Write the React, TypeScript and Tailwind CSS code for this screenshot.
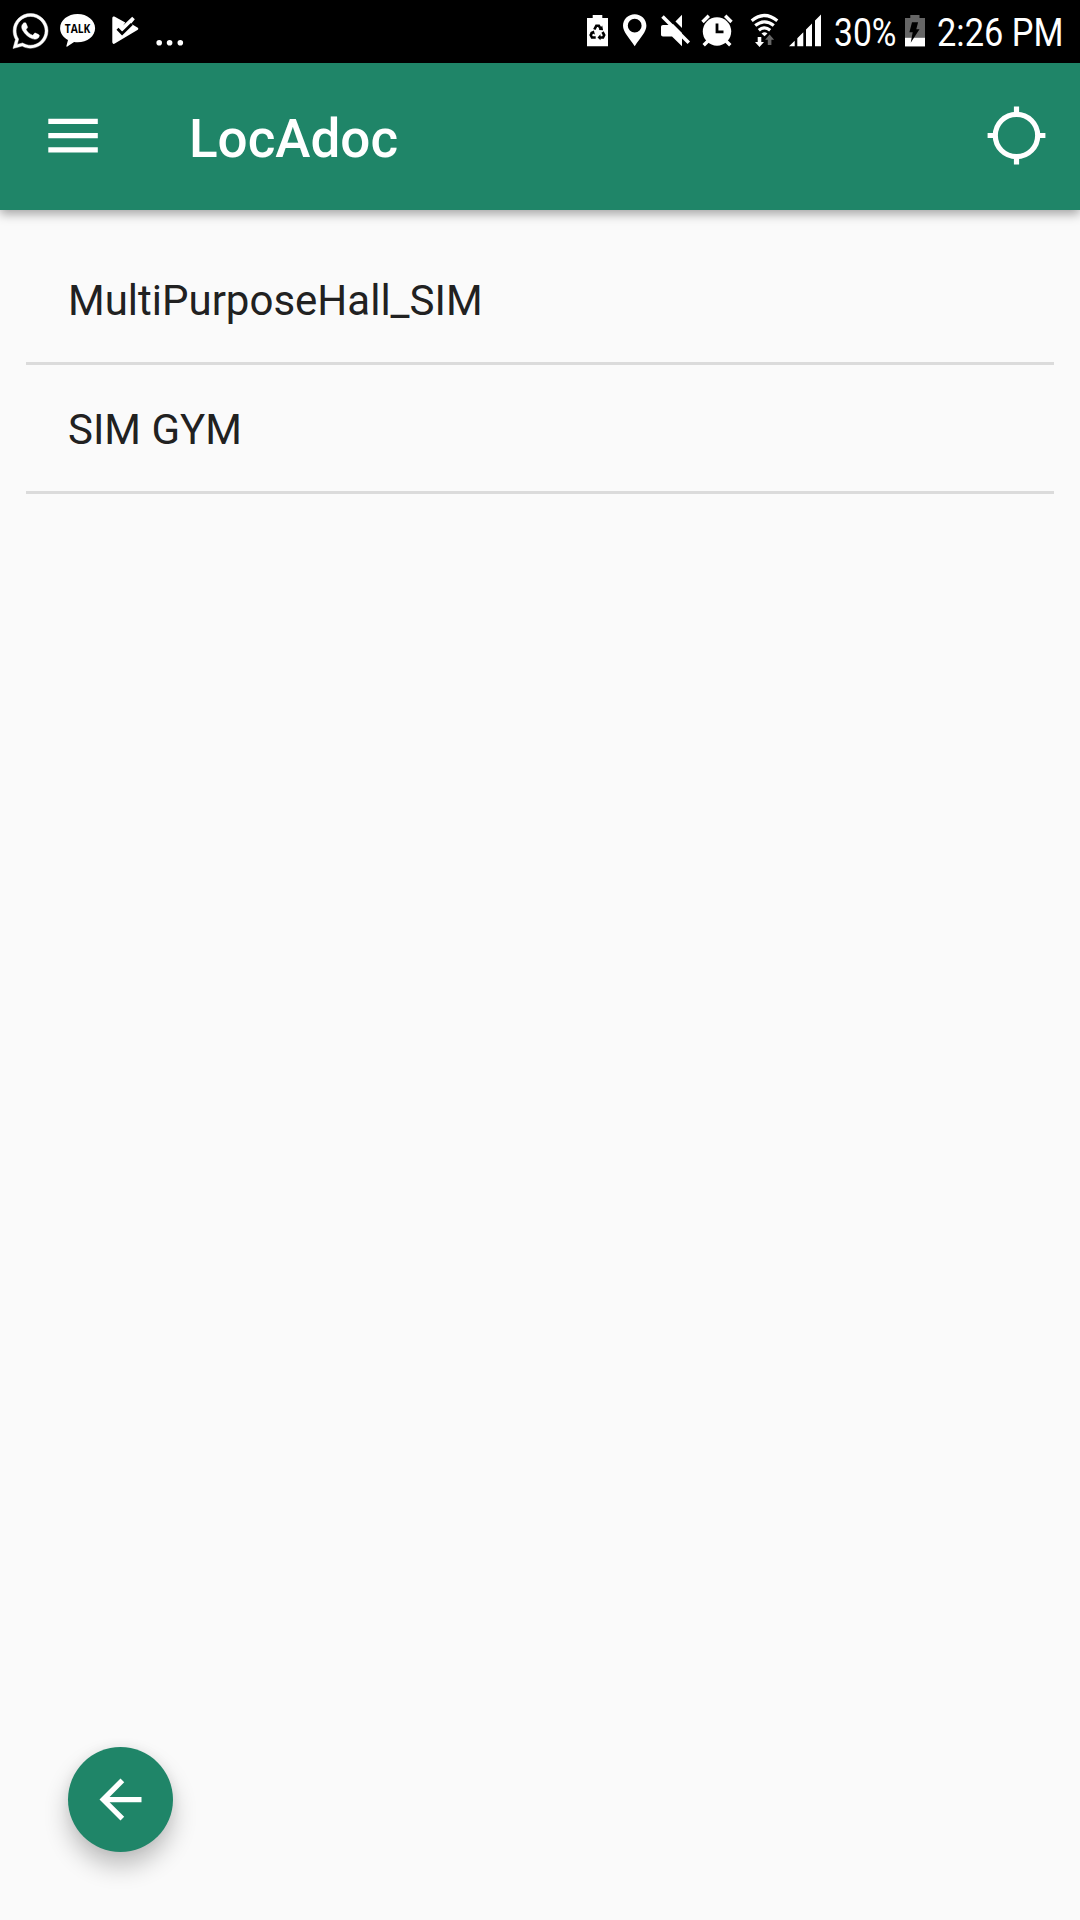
import { FaWhatsapp } from "react-icons/fa";

function NotificationIcons() {
  return (
    <div className="flex h-full items-start">
      <FaWhatsapp className="ml-[13px] mt-[11px] h-[40px] w-[35px] overflow-visible stroke-white stroke-[6px]" />
      <svg className="ml-[11px] mt-[13px] h-[35px] w-[38px]" viewBox="59 13 38 35">
        <path d="M77.6 14c-9.7 0-17.5 6.200-17.500 14.200 0 5 3.100 9.300 7.900 11.800l-1.600 6c-.2.7.4 1 .9.600l6.800-4.600c1.100.2 2.300.3 3.500.3 9.700 0 17.500-6.200 17.500-14.100S87.300 14 77.600 14z" fill="white" />
        <text x="64.8" y="32.800" textLength="25.500" lengthAdjust="spacingAndGlyphs" fontSize="12.300" fontWeight="700" fill="black" fontFamily="Open Sans, sans-serif">TALK</text>
      </svg>
      <svg className="ml-[14px] mt-[14px] h-[34px] w-[30px]" viewBox="111 14 30 34">
        <path d="M112.300 18.300c0-1.500 1.200-2.200 2.500-1.500l10.500 5.700-2.200 3.100 9.100-8.900 2.600 2.600-3.700 4.400 6.300 3.900c1.200.7 1.200 1.800 0 2.500l-22.600 13.500c-1.300.8-2.500.1-2.500-1.500z" fill="white" />
        <path d="M117.500 28.700l4.600 4.700 9.700-9.500" fill="none" stroke="black" strokeWidth="2.800" />
      </svg>
      <svg className="ml-[14px] mt-[38px] h-[9px] w-[30px]" viewBox="155 38 30 9">
        <g fill="white">
          <circle cx="159.200" cy="42.800" r="2.800" />
          <circle cx="169.600" cy="42.800" r="2.800" />
          <circle cx="180.300" cy="42.800" r="2.800" />
        </g>
      </svg>
    </div>
  );
}

function SystemIcons() {
  return (
    <div className="flex h-full shrink-0 items-start">
      <svg className="mt-[12px] h-[36px] w-[24px]" viewBox="586 12 24 36">
        <path d="M592.700 15h9.600v3h5.700v28.300h-21V18h5.700z" fill="white" />
        <g fill="none" stroke="black" strokeWidth="2.600">
          <path d="M594.300 29.500l2-3.700h2.600l1.700 2.800" />
          <path d="M602.500 32l1.700 3.100-1.200 2.400h-3" />
          <path d="M595.700 37.500h-3.700l-1.300-2.400 1.500-2.700" />
        </g>
        <path d="M598.800 30l4.300.200-.9-4.700zM600.500 34.300v6l-3-2.800zM590 32.300l3.900-1.800 1 4z" fill="black" />
      </svg>
      <svg className="ml-[12px] mt-[12px] h-[36px] w-[26px]" viewBox="622 12 26 36">
        <path fillRule="evenodd" d="M634.700 14.300c-6.500 0-11.700 5-11.700 11.500 0 6.300 6 11.700 11.700 20.500 5.700-8.800 11.700-14.200 11.700-20.500 0-6.500-5.200-11.500-11.700-11.500zm0 4.500a6.900 6.900 0 1 1 0 13.800 6.900 6.900 0 0 1 0-13.800z" fill="white" />
      </svg>
      <svg className="ml-[12px] mt-[12px] h-[36px] w-[32px]" viewBox="660 12 32 36">
        <path d="M682 14.700v31.600L672 36.500h-9c-1.200 0-2-.8-2-2v-7.600c0-1.200.8-2 2-2h9z" fill="white" />
        <path d="M665.500 14l27 27" stroke="black" strokeWidth="3.500" />
        <path d="M662.500 16.500l26.300 26.300" stroke="white" strokeWidth="3.500" />
      </svg>
      <svg className="ml-[8px] mt-[12px] h-[36px] w-[34px]" viewBox="700 12 34 36">
        <circle cx="717" cy="31.500" r="14.200" fill="white" />
        <g fill="none" stroke="white" strokeWidth="3.400">
          <path d="M702.500 22l6.300-6.300M731.500 22l-6.300-6.300M708 41l-4.300 4.300M726 41l4.300 4.300" />
        </g>
        <path d="M717 23.500v8.300h6.500" fill="none" stroke="black" strokeWidth="2.800" />
      </svg>
      <svg className="ml-[16px] mt-[12px] h-[36px] w-[30px]" viewBox="750 12 30 36">
        <g fill="none" stroke="white" strokeWidth="3.200">
          <path d="M751.700 20.800q12.800-10.600 25.600 0M755.200 25.600q9.300-7.600 18.600 0M758.800 30.200q5.700-4.800 11.400 0" />
        </g>
        <path d="M761.500 33.600q3-2.600 6 0l-3 2.700z" fill="white" />
        <path d="M757.700 37h3.600v5h2.700l-4.500 5-4.500-5h2.700z" fill="white" />
        <path d="M767.800 45h3.600v-5.300h2.700l-4.500-5.200-4.500 5.200h2.700z" fill="#666666" />
      </svg>
      <svg className="ml-[9px] mt-[12px] h-[36px] w-[33px]" viewBox="789 12 33 36">
        <path d="M789 46.300l5.700-5.500v5.500zM797.300 38.300l6-6v14h-6zM806 29.500l6-6v22.800h-6zM815 20.500l6-6v31.800h-6z" fill="white" />
      </svg>
    </div>
  );
}

function StatusBar() {
  return (
    <div className="flex h-[63px] justify-between bg-black text-white">
      <NotificationIcons />
      <div className="flex h-full w-[494px] items-start">
        <SystemIcons />
        <div className="ml-[12px] mt-[9px] w-[64px] shrink-0 whitespace-nowrap text-[39.500px] leading-[48px]">
          <span className="inline-block origin-left scale-x-[0.852]">30%</span>
        </div>
        <svg className="ml-[6px] mt-[12px] h-[36px] w-[22px] shrink-0" viewBox="904 12 22 36">
          <path d="M910.300 15h9.200v3h5.500v28.500h-20V18h5.300z" fill="#666666" />
          <path d="M905 37.800h20v8.500h-20z" fill="white" />
          <path d="M912 22.300h6.100l-1.800 7h3.200l-8.800 13.400 2-10.400h-3.300z" fill="black" />
        </svg>
        <div className="ml-[11px] mt-[9px] w-[127px] shrink-0 whitespace-nowrap text-[39.500px] leading-[48px]">
          <span className="inline-block origin-left scale-x-[0.870]">2:26 PM</span>
        </div>
      </div>
    </div>
  );
}

function AppBar() {
  return (
    <header className="relative flex h-[147px] items-center bg-[#1f8568] text-white shadow-[0_4px_10px_rgba(0,0,0,0.35)]">
      <button className="ml-[42px] -mt-px flex size-[63px] items-center justify-center" aria-label="Menu">
        <svg className="size-[63px]" viewBox="0 0 63 63" fill="white">
          <path d="M6.300 13.700h49.500v5.300H6.300zM6.300 28h49.500v5.300H6.300zM6.300 42.300h49.500v5.300H6.300z" />
        </svg>
      </button>
      <h1 className="ml-[84px] mt-[4px] flex-1 text-[53px] font-medium leading-[62px]">LocAdoc</h1>
      <button className="mr-[32px] mt-[-2px] size-[63px]" aria-label="Current location">
        <svg className="size-[63px]" viewBox="0 0 63 63" fill="none" stroke="white" strokeWidth="5.200">
          <circle cx="31.500" cy="31.500" r="21.200" />
          <path d="M31.500 2.600v6.500M31.500 54v6.400M2.600 31.500h6.500M54 31.500h6.400" />
        </svg>
      </button>
    </header>
  );
}

const places = ["MultiPurposeHall_SIM", "SIM GYM"];

export default function App() {
  return (
    <div className="flex h-[1920px] w-[1080px] flex-col overflow-hidden bg-[#fafafa] font-[Roboto,sans-serif]">
      <StatusBar />
      <AppBar />
      <ul className="flex-1 px-[26px] pt-[26px]">
        {places.map((place) => (
          <li key={place} className="flex h-[129px] items-center border-b-[3px] border-[#dbdbdb] px-[42px] pt-[3px] text-[42px] text-[#212121]">
            {place}
          </li>
        ))}
      </ul>
      <button className="mb-[68px] ml-[68px] flex size-[105px] items-center justify-center rounded-full bg-[#1f8568] shadow-[0_14px_24px_rgba(0,0,0,0.24),0_0_12px_rgba(0,0,0,0.06)]" aria-label="Back">
        <svg className="size-[63px]" viewBox="0 0 24 24" fill="white">
          <path d="M20 11H7.830l5.590-5.590L12 4l-8 8 8 8 1.410-1.410L7.830 13H20v-2z" />
        </svg>
      </button>
    </div>
  );
}
